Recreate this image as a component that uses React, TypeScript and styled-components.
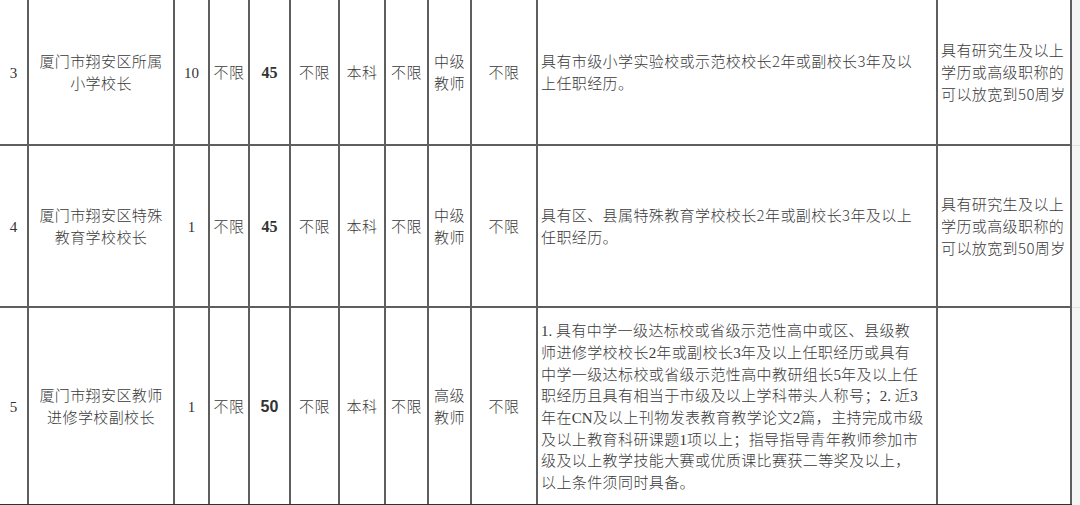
import React from "react";
import styled, { createGlobalStyle } from "styled-components";

const GlobalStyle = createGlobalStyle`
  html, body { margin: 0; padding: 0; background: #ffffff; }
  body { width: 1080px; height: 505px; overflow: hidden; }
`;

const Table = styled.table`
  width: 1080px;
  border-collapse: collapse;
  table-layout: fixed;
  font-family: "Noto Sans CJK SC", "Noto Sans", sans-serif;
  font-weight: 300;
  font-size: 15px;
  color: #3a3a3a;
`;

const Row = styled.tr<{ $h: number }>`
  height: ${(p) => p.$h}px;
`;

const Cell = styled.td<{ $align?: "left" | "center"; $pad?: number }>`
  border: 2px solid #5e5e5e;
  padding: 0 0 0 ${(p) => p.$pad ?? 0}px;
  text-align: ${(p) => p.$align ?? "center"};
  vertical-align: middle;
  line-height: 21.7px;
  letter-spacing: 0.4px;
  white-space: nowrap;
  overflow: hidden;
  tr:first-child > & { border-top: none; }
  tr:last-child > & { border-bottom-color: #303030; }
  &:first-child { border-left: none; }
`;

const Filler = styled.td`
  border-top: 1px solid #e2e2e2;
  border-bottom: 1px solid #e2e2e2;
  border-right: none;
  background: #f5f5f5;
  padding: 0;
  tr:first-child > & { border-top: none; }
`;

const Num = styled.span<{ $bold?: boolean; $sans?: boolean; $size?: number }>`
  font-family: ${(p) => (p.$sans ? '"Liberation Sans", Arial, sans-serif' : '"Liberation Serif", "Times New Roman", serif')};
  font-weight: ${(p) => (p.$bold ? 700 : 400)};
  font-size: ${(p) => p.$size ?? 15}px;
  line-height: 1;
  letter-spacing: 0;
  color: #333;
`;

const Lat = styled.span`
  font-family: "Liberation Serif", "Times New Roman", serif;
  line-height: 1;
  letter-spacing: 0;
`;

const widths = [28, 146, 35, 40, 41, 49, 46, 43, 43, 66, 400, 134, 9];

type RowData = {
  h: number;
  no: string;
  title: [string, string];
  count: string;
  age: string;
  ageSans?: boolean;
  rank: [string, string];
  desc: React.ReactNode[];
  note: string[];
};

const rows: RowData[] = [
  {
    h: 145,
    no: "3",
    title: ["厦门市翔安区所属", "小学校长"],
    count: "10",
    age: "45",
    rank: ["中级", "教师"],
    desc: ["具有市级小学实验校或示范校校长2年或副校长3年及以", "上任职经历。"],
    note: ["具有研究生及以上", "学历或高级职称的", "可以放宽到50周岁"],
  },
  {
    h: 162,
    no: "4",
    title: ["厦门市翔安区特殊", "教育学校校长"],
    count: "1",
    age: "45",
    rank: ["中级", "教师"],
    desc: ["具有区、县属特殊教育学校校长2年或副校长3年及以上", "任职经历。"],
    note: ["具有研究生及以上", "学历或高级职称的", "可以放宽到50周岁"],
  },
  {
    h: 198,
    no: "5",
    title: ["厦门市翔安区教师", "进修学校副校长"],
    count: "1",
    age: "50",
    ageSans: true,
    rank: ["高级", "教师"],
    desc: [
      <>
        <Lat>1. </Lat>具有中学一级达标校或省级示范性高中或区、县级教
      </>,
      <>
        师进修学校校长<Lat>2</Lat>年或副校长<Lat>3</Lat>年及以上任职经历或具有
      </>,
      <>
        中学一级达标校或省级示范性高中教研组长<Lat>5</Lat>年及以上任
      </>,
      <>
        职经历且具有相当于市级及以上学科带头人称号；<Lat>2. </Lat>近<Lat>3</Lat>
      </>,
      <>
        年在<Lat>CN</Lat>及以上刊物发表教育教学论文<Lat>2</Lat>篇，主持完成市级
      </>,
      <>
        及以上教育科研课题<Lat>1</Lat>项以上；指导指导青年教师参加市
      </>,
      "级及以上教学技能大赛或优质课比赛获二等奖及以上，",
      "以上条件须同时具备。",
    ],
    note: [],
  },
];

const Lines = ({ items }: { items: React.ReactNode[] }) => (
  <>
    {items.map((t, i) => (
      <React.Fragment key={i}>
        {i > 0 && <br />}
        {t}
      </React.Fragment>
    ))}
  </>
);

export default function App() {
  return (
    <>
      <GlobalStyle />
      <Table>
        <colgroup>
          {widths.map((w, i) => (
            <col key={i} style={{ width: w }} />
          ))}
        </colgroup>
        <tbody>
          {rows.map((r) => (
            <Row key={r.no} $h={r.h}>
              <Cell>
                <Num>{r.no}</Num>
              </Cell>
              <Cell>
                <Lines items={r.title} />
              </Cell>
              <Cell>
                <Num>{r.count}</Num>
              </Cell>
              <Cell>不限</Cell>
              <Cell>
                <Num $bold $sans={r.ageSans} $size={16}>
                  {r.age}
                </Num>
              </Cell>
              <Cell>不限</Cell>
              <Cell>本科</Cell>
              <Cell>不限</Cell>
              <Cell>
                <Lines items={r.rank} />
              </Cell>
              <Cell>不限</Cell>
              <Cell $align="left" $pad={3}>
                <Lines items={r.desc} />
              </Cell>
              <Cell $align="left" $pad={3}>
                <Lines items={r.note} />
              </Cell>
              <Filler />
            </Row>
          ))}
        </tbody>
      </Table>
    </>
  );
}
